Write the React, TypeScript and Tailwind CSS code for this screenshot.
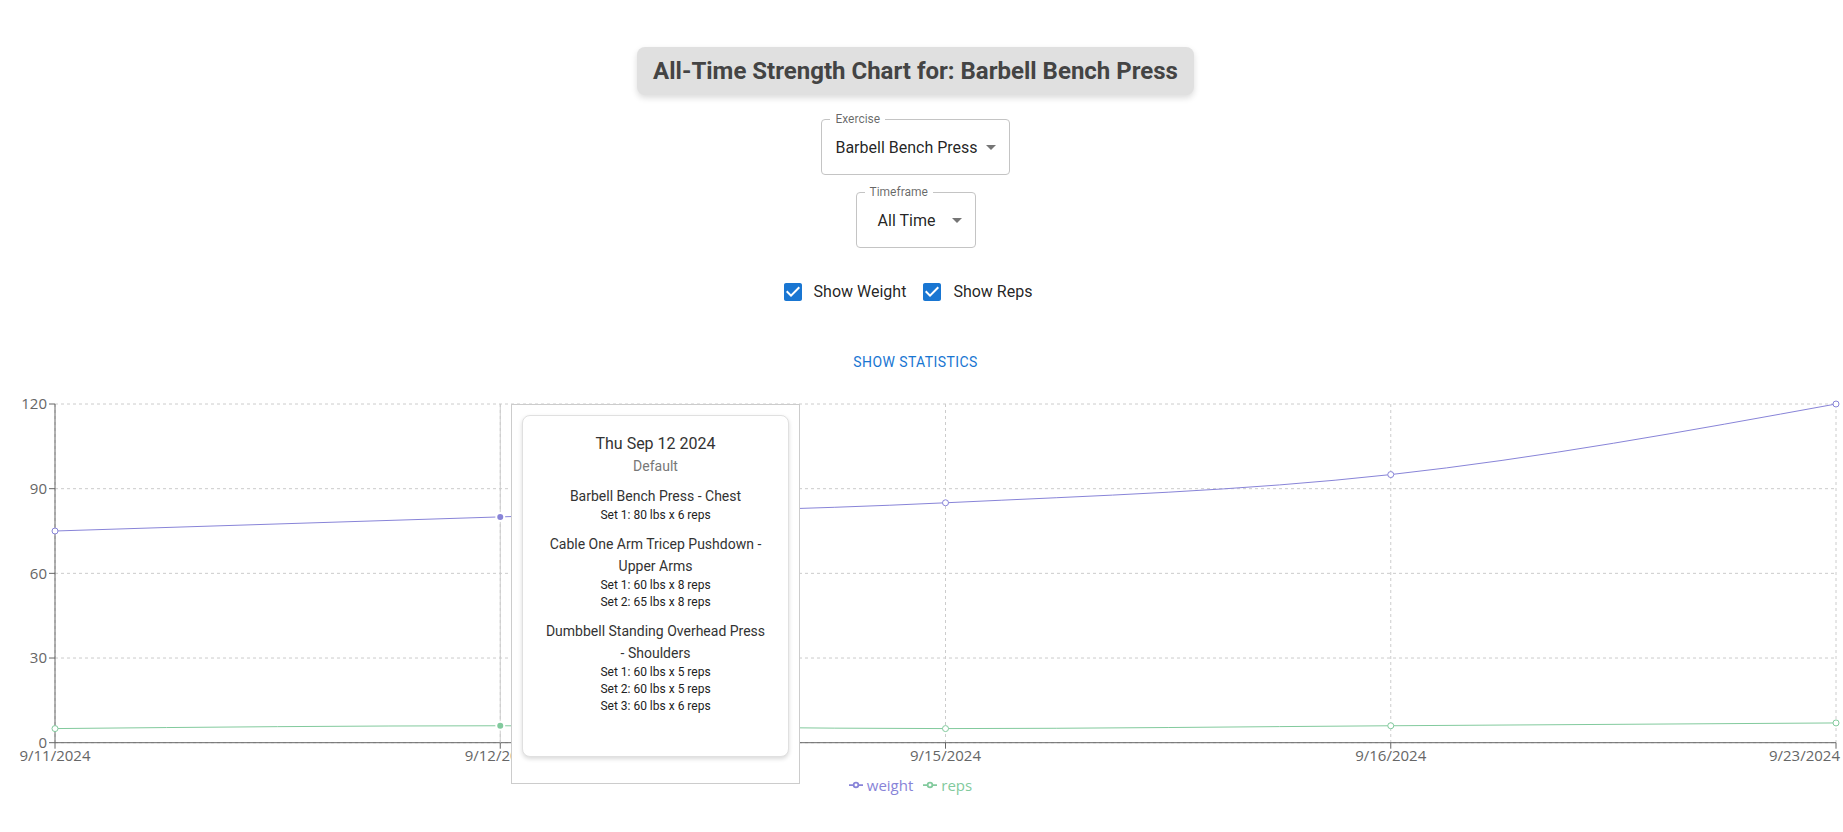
import React from 'react';

type Pt = [number, number];

const WEIGHT = '#8884d8';
const REPS = '#82ca9d';

const data = [
  { date: '9/11/2024', weight: 75, reps: 5 },
  { date: '9/12/2024', weight: 80, reps: 6 },
  { date: '9/15/2024', weight: 85, reps: 5 },
  { date: '9/16/2024', weight: 95, reps: 6 },
  { date: '9/23/2024', weight: 120, reps: 7 },
];

// names are split where the tooltip card wraps them
const workout = [
  { name: ['Barbell Bench Press - Chest'], sets: ['Set 1: 80 lbs x 6 reps'] },
  { name: ['Cable One Arm Tricep Pushdown -', 'Upper Arms'], sets: ['Set 1: 60 lbs x 8 reps', 'Set 2: 65 lbs x 8 reps'] },
  {
    name: ['Dumbbell Standing Overhead Press', '- Shoulders'],
    sets: ['Set 1: 60 lbs x 5 reps', 'Set 2: 60 lbs x 5 reps', 'Set 3: 60 lbs x 6 reps'],
  },
];

// plot box inside the chart svg
const PLOT = { left: 55, right: 1836, top: 5, bottom: 343.7 };
const Y_MAX = 120;
const yTicks = [0, 30, 60, 90, 120];
const active = 1;

const xOf = (i: number) => PLOT.left + ((PLOT.right - PLOT.left) * i) / (data.length - 1);
const yOf = (v: number) => PLOT.bottom - (v / Y_MAX) * (PLOT.bottom - PLOT.top);

// same math as d3 curveMonotoneX
function monotone(points: Pt[]) {
  const n = points.length;
  const s: number[] = [];
  for (let i = 0; i < n - 1; i++) {
    s.push((points[i + 1][1] - points[i][1]) / (points[i + 1][0] - points[i][0]));
  }
  const sign = (v: number) => (v < 0 ? -1 : 1);
  const t: number[] = new Array(n).fill(0);
  for (let i = 1; i < n - 1; i++) {
    const h0 = points[i][0] - points[i - 1][0];
    const h1 = points[i + 1][0] - points[i][0];
    const p = (s[i - 1] * h1 + s[i] * h0) / (h0 + h1);
    t[i] = (sign(s[i - 1]) + sign(s[i])) * Math.min(Math.abs(s[i - 1]), Math.abs(s[i]), 0.5 * Math.abs(p)) || 0;
  }
  t[0] = (3 * s[0] - t[1]) / 2;
  t[n - 1] = (3 * s[n - 2] - t[n - 2]) / 2;
  let d = `M${points[0][0]},${points[0][1]}`;
  for (let i = 0; i < n - 1; i++) {
    const [x0, y0] = points[i];
    const [x1, y1] = points[i + 1];
    const dx = (x1 - x0) / 3;
    d += `C${x0 + dx},${y0 + dx * t[i]},${x1 - dx},${y1 - dx * t[i + 1]},${x1},${y1}`;
  }
  return d;
}

const ArrowDrop = () => (
  <svg viewBox="0 0 24 24" className="absolute right-[6px] top-[calc(50%-12px)] h-6 w-6 fill-[rgba(0,0,0,0.54)]">
    <path d="M7 10l5 5 5-5z" />
  </svg>
);

const OutlinedSelect = ({ label, value, className }: { label: string; value: string; className?: string }) => (
  <div className={'relative flex h-14 items-center rounded border border-[#c4c4c4] pl-[13px] pr-[31px] ' + (className || '')}>
    <span className="absolute -top-[9px] left-2 bg-white px-[5px] text-[12px] leading-[17px] text-[rgba(0,0,0,0.6)]">
      {label}
    </span>
    <span className="w-full text-base leading-[23px] text-[rgba(0,0,0,0.87)]">{value}</span>
    <ArrowDrop />
  </div>
);

const CheckLabel = ({ text }: { text: string }) => (
  <label className="-ml-[11px] mr-4 inline-flex items-center">
    <span className="p-[9px]">
      <svg viewBox="0 0 24 24" className="h-6 w-6 fill-[#1976d2]">
        <path d="M19 3H5c-1.11 0-2 .9-2 2v14c0 1.1.89 2 2 2h14c1.11 0 2-.9 2-2V5c0-1.1-.89-2-2-2zm-9 14l-5-5 1.41-1.41L10 14.17l7.59-7.59L19 8l-9 9z" />
      </svg>
    </span>
    <span className="text-base leading-6 text-[rgba(0,0,0,0.87)]">{text}</span>
  </label>
);

const LegendItem = ({ color, text }: { color: string; text: string }) => (
  <span className="mr-[10px] inline-flex items-center">
    <svg width="14" height="14" viewBox="0 0 32 32" className="mr-1">
      <path
        strokeWidth={4}
        fill="none"
        stroke={color}
        d="M0,16h10.666666666666666A5.333333333333333,5.333333333333333,0,1,1,21.333333333333332,16H32M21.333333333333332,16A5.333333333333333,5.333333333333333,0,1,1,10.666666666666666,16"
      />
    </svg>
    <span style={{ color }}>{text}</span>
  </span>
);

const Chart = () => {
  const wPts: Pt[] = data.map((d, i) => [xOf(i), yOf(d.weight)]);
  const rPts: Pt[] = data.map((d, i) => [xOf(i), yOf(d.reps)]);

  return (
    <div className="relative mt-[18px] w-full font-['Open_Sans',sans-serif]">
      <svg width="1843" height="372" className="block">
        {/* grid */}
        <g stroke="#ccc" strokeDasharray="3 3" fill="none">
          {yTicks.map((v) => (
            <line key={v} x1={PLOT.left} x2={PLOT.right} y1={yOf(v)} y2={yOf(v)} />
          ))}
          {data.map((_, i) => (
            <line key={i} x1={xOf(i)} x2={xOf(i)} y1={PLOT.top} y2={PLOT.bottom} />
          ))}
        </g>

        {/* y axis */}
        <g stroke="#666">
          <line x1={PLOT.left} x2={PLOT.left} y1={PLOT.top} y2={PLOT.bottom} />
          {yTicks.map((v) => (
            <line key={v} x1={PLOT.left - 6} x2={PLOT.left} y1={yOf(v)} y2={yOf(v)} />
          ))}
        </g>
        {yTicks.map((v) => (
          <text key={v} x={PLOT.left - 8} y={yOf(v)} dy="0.355em" textAnchor="end" fill="#666" fontSize={15}>
            {v}
          </text>
        ))}

        {/* x axis */}
        <g stroke="#666">
          <line x1={PLOT.left} x2={PLOT.right} y1={PLOT.bottom} y2={PLOT.bottom} />
          {data.map((_, i) => (
            <line key={i} x1={xOf(i)} x2={xOf(i)} y1={PLOT.bottom} y2={PLOT.bottom + 6} />
          ))}
        </g>
        {data.map((d, i) => (
          <text
            key={d.date}
            x={i === data.length - 1 ? 1840 : xOf(i)}
            y={PLOT.bottom + 8}
            dy="0.71em"
            textAnchor={i === data.length - 1 ? 'end' : 'middle'}
            fill="#666"
            fontSize={15}
          >
            {d.date}
          </text>
        ))}

        {/* tooltip cursor */}
        <line x1={xOf(active)} x2={xOf(active)} y1={PLOT.top} y2={PLOT.bottom} stroke="#ccc" />

        {/* lines */}
        <path d={monotone(wPts)} fill="none" stroke={WEIGHT} strokeWidth={1} />
        <path d={monotone(rPts)} fill="none" stroke={REPS} strokeWidth={1} />

        {[
          { pts: wPts, color: WEIGHT },
          { pts: rPts, color: REPS },
        ].map(({ pts, color }) =>
          pts.map(([x, y], i) =>
            i === active ? (
              <circle key={color + i} cx={x} cy={y} r={4} fill={color} stroke="#fff" strokeWidth={2} />
            ) : (
              <circle key={color + i} cx={x} cy={y} r={3} fill="#fff" stroke={color} strokeWidth={1} />
            )
          )
        )}
      </svg>

      {/* legend */}
      <div className="flex h-[28px] items-center justify-center pr-3 text-[15px] leading-5">
        <LegendItem color={WEIGHT} text="weight" />
        <LegendItem color={REPS} text="reps" />
      </div>

      {/* tooltip */}
      <div className="absolute left-[511px] top-[5px] w-[289px] border border-[#ccc] bg-white p-[10px] pb-[26px] font-['Roboto',sans-serif]">
        <div className="rounded-lg border border-[#e0e0e0] bg-white px-4 pt-4 pb-[41px] text-center shadow-[0_2px_4px_rgba(0,0,0,0.15)]">
          <div className="text-base leading-6 text-[#333]">Thu Sep 12 2024</div>
          <div className="text-sm leading-5 text-[#777]">Default</div>
          {workout.map((ex) => (
            <div key={ex.name[0]} className="mt-[9px]">
              {ex.name.map((line) => (
                <div key={line} className="text-sm leading-[22px] text-[#333]">
                  {line}
                </div>
              ))}
              {ex.sets.map((s) => (
                <div key={s} className="text-xs leading-[17px] text-[#222]">
                  {s}
                </div>
              ))}
            </div>
          ))}
        </div>
      </div>
    </div>
  );
};

export default function App() {
  return (
    <div className="min-h-screen bg-white font-['Roboto',sans-serif]">
      <div className="flex flex-col items-center pr-3 pt-[47px]">
        <div className="rounded-lg bg-[#e0e0e0] px-4 py-2 shadow-[0_3px_6px_rgba(0,0,0,0.14)]">
          <h1 className="text-2xl font-bold leading-8 text-[#444]">All-Time Strength Chart for: Barbell Bench Press</h1>
        </div>

        <OutlinedSelect label="Exercise" value="Barbell Bench Press" className="mt-6" />
        <OutlinedSelect label="Timeframe" value="All Time" className="mt-[17px] min-w-[120px] text-center" />

        <div className="mt-[23px] flex justify-center">
          <CheckLabel text="Show Weight" />
          <CheckLabel text="Show Reps" />
        </div>

        <button className="mt-[31px] rounded px-2 py-[6px] text-sm font-normal uppercase leading-[24.5px] tracking-[0.4px] text-[#1976d2]">
          Show Statistics
        </button>
      </div>

      <Chart />
    </div>
  );
}
